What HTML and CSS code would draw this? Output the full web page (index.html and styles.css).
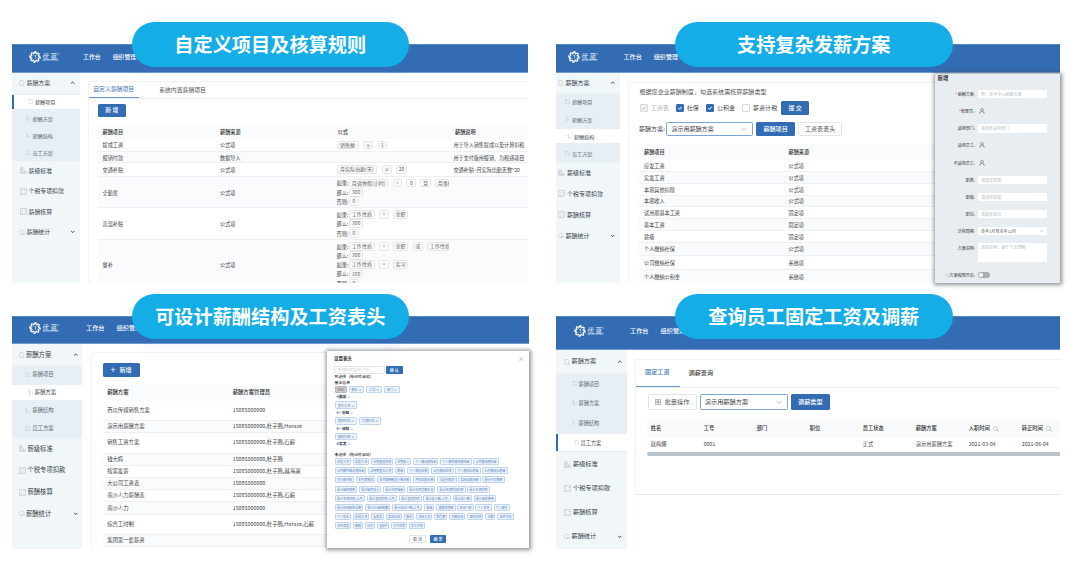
FILE: index.html
```html
<!DOCTYPE html>
<html lang="zh-CN">
<head>
<meta charset="utf-8">
<title>薪酬管理</title>
<link rel="stylesheet" href="styles.css">
</head>
<body>
<svg class="defs" width="0" height="0">
  <symbol id="gear" viewBox="0 0 20 20"><g fill="none" stroke="#fff" stroke-width="2.6" stroke-linecap="round"><path id="petal" d="M7.500 4.500Q8.500 1.800 11.500 1.500"/><use href="#petal" transform="rotate(45 10 10)"/><use href="#petal" transform="rotate(90 10 10)"/><use href="#petal" transform="rotate(135 10 10)"/><use href="#petal" transform="rotate(180 10 10)"/><use href="#petal" transform="rotate(225 10 10)"/><use href="#petal" transform="rotate(270 10 10)"/><use href="#petal" transform="rotate(315 10 10)"/></g><path d="M9 7.500h2.500l-1 5" fill="none" stroke="#dce8f6" stroke-width="1.2"/></symbol>
  <symbol id="doc" viewBox="0 0 12 12"><path d="M9.500 6V3L7.500 1H2v10h4M7 8h4M7 10.500h4" /></symbol>
  <symbol id="flow" viewBox="0 0 12 12"><path d="M3 1.500a1.500 1.500 0 1 0 .1 0M3 4.500v5M3 8h3M7.500 8H11M3 9v2h2"/></symbol>
  <symbol id="stair" viewBox="0 0 12 12"><path d="M1 1h3.500v3.500H7V8h4v3H1zM3 3v6h6"/></symbol>
  <symbol id="calc" viewBox="0 0 12 12"><path d="M.8.8h10.400v10.400H.8zM3 4h2M7.500 3l2 2M9.500 3l-2 2M3 8.500h2M4 7.500v2M7.500 8.500h2"/></symbol>
  <symbol id="pie" viewBox="0 0 12 12"><path d="M10.500 4.500A5 5 0 1 0 6 11M7 7h4v2.500H7zM7 7v4"/></symbol>
  <symbol id="up" viewBox="0 0 10 10"><path d="M2 6.500 5 3.500 8 6.500"/></symbol>
  <symbol id="down" viewBox="0 0 10 10"><path d="M2 3.500 5 6.500 8 3.500"/></symbol>
  <symbol id="user" viewBox="0 0 12 12"><path d="M6 1a2.800 2.800 0 1 1-.1 0M1.500 11.500Q2 7 5 6.500M7 6.500q3 .5 3.500 5"/></symbol>
  <symbol id="find" viewBox="0 0 12 12"><path d="M5 1a4 4 0 1 1-.1 0M8 8l3.500 3.500"/></symbol>
  <symbol id="check" viewBox="0 0 12 12"><path d="m2.500 6 2.600 2.600L9.500 3.500"/></symbol>
  <symbol id="grid" viewBox="0 0 12 12"><path d="M1 1h10v4.500H1zM1 6.500h10V11H1zM4 3.200h4M4 8.700h4"/></symbol>
</svg>

<main class="page">

<section class="panel p1">
  <header class="bar"><svg class="gear"><use href="#gear"/></svg><div class="brand"><b>优 蓝<sup>®</sup></b><small>youlanw.com</small></div><nav><span>工作台</span><span>组织管理</span></nav></header>
  <div class="body">
    <aside class="side">
      <div class="group"><svg><use href="#doc"/></svg>薪酬方案<svg class="caret"><use href="#up"/></svg></div>
      <div class="sub">
        <div class="item on"><svg><use href="#doc"/></svg>薪酬项目</div>
        <div class="item"><svg><use href="#flow"/></svg>薪酬方案</div>
        <div class="item"><svg><use href="#flow"/></svg>薪酬结构</div>
        <div class="item"><svg><use href="#doc"/></svg>员工方案</div>
      </div>
      <div class="top"><svg><use href="#stair"/></svg>薪级标准</div>
      <div class="top"><svg><use href="#calc"/></svg>个税专项扣款</div>
      <div class="top"><svg><use href="#calc"/></svg>薪酬核算</div>
      <div class="top last"><svg><use href="#pie"/></svg>薪酬统计<svg class="caret"><use href="#down"/></svg></div>
    </aside>
    <div class="card">
      <div class="tabs"><span class="on">自定义薪酬项目</span><span>系统内置薪酬项目</span></div>
      <button class="btn">新 增</button>
      <div class="table">
        <div class="tr th"><span>薪酬项目</span><span>薪酬来源</span><span>公式</span><span>薪酬说明</span></div>
        <div class="tr"><span>提成工资</span><span>公式项</span><div class="fx plain"><p><i>销售额</i><i>×</i><i>1</i></p></div><span class="wide">用于导入销售提成以及计算扣税</span></div>
        <div class="tr"><span>报销付款</span><span>数据导入</span><span></span><span class="wide">用于支付备用报销、为税感项目</span></div>
        <div class="tr"><span>交通补贴</span><span>公式项</span><div class="fx plain"><p><i>月实际出勤(天)</i><i>×</i><i>20</i></p></div><span class="wide">交通补贴=月实际出勤天数*20</span></div>
        <div class="tr"><span>全勤奖</span><span>公式项</span><div class="fx"><p>如果:<i>月调休假(小时)</i><i>=</i><i>0</i><i>且</i><i>月事假</i></p><p>那么:<i>300</i></p><p>否则:<i>0</i></p></div></div>
        <div class="tr"><span>高温补贴</span><span>公式项</span><div class="fx"><p>如果:<i>工作性质</i><i>=</i><i>全职</i></p><p>那么:<i>300</i></p><p>否则:<i>0</i></p></div></div>
        <div class="tr"><span>餐补</span><span>公式项</span><div class="fx"><p>如果:<i>工作性质</i><i>=</i><i>全职</i><i>或</i><i>工作性质</i></p><p>那么:<i>300</i></p><p>如果:<i>工作性质</i><i>=</i><i>实习</i></p><p>那么:<i>100</i></p><p>否则:<i>0</i></p></div></div>
      </div>
    </div>
  </div>
  <h2 class="pill">自定义项目及核算规则</h2>
</section>

<section class="panel p2">
  <header class="bar"><svg class="gear"><use href="#gear"/></svg><div class="brand"><b>优 蓝<sup>®</sup></b><small>youlanw.com</small></div><nav><span>工作台</span><span>组织管理</span></nav></header>
  <div class="body">
    <aside class="side">
      <div class="group"><svg><use href="#doc"/></svg>薪酬方案<svg class="caret"><use href="#up"/></svg></div>
      <div class="sub">
        <div class="item"><svg><use href="#doc"/></svg>薪酬项目</div>
        <div class="item"><svg><use href="#flow"/></svg>薪酬方案</div>
        <div class="item on"><svg><use href="#flow"/></svg>薪酬结构</div>
        <div class="item"><svg><use href="#doc"/></svg>员工方案</div>
      </div>
      <div class="top"><svg><use href="#stair"/></svg>薪级标准</div>
      <div class="top"><svg><use href="#calc"/></svg>个税专项扣款</div>
      <div class="top"><svg><use href="#calc"/></svg>薪酬核算</div>
      <div class="top last"><svg><use href="#pie"/></svg>薪酬统计<svg class="caret"><use href="#down"/></svg></div>
    </aside>
    <div class="card">
      <p class="hint">根据您企业薪酬制度，勾选系统需核算薪酬类型</p>
      <div class="checks">
        <label class="off"><em><svg><use href="#check"/></svg></em>工资表</label>
        <label class="sel"><em><svg><use href="#check"/></svg></em>社保</label>
        <label class="sel"><em><svg><use href="#check"/></svg></em>公积金</label>
        <label><em></em>薪资计税</label>
        <button class="btn">提 交</button>
      </div>
      <div class="tools"><span>薪酬方案:</span><div class="select">演示用薪酬方案<svg><use href="#down"/></svg></div><button class="btn">薪酬项目</button><button class="btn ghost">工资表表头</button></div>
      <div class="table">
        <div class="tr th"><span>薪酬项目</span><span>薪酬来源</span></div>
        <div class="tr"><span>应发工资</span><span>公式项</span></div>
        <div class="tr"><span>实发工资</span><span>公式项</span></div>
        <div class="tr"><span>本期其他扣除</span><span>公式项</span></div>
        <div class="tr"><span>本期收入</span><span>公式项</span></div>
        <div class="tr"><span>试用期基本工资</span><span>固定项</span></div>
        <div class="tr"><span>基本工资</span><span>固定项</span></div>
        <div class="tr"><span>薪级</span><span>固定项</span></div>
        <div class="tr"><span>个人缴纳社保</span><span>公式项</span></div>
        <div class="tr"><span>公司缴纳社保</span><span>系统项</span></div>
        <div class="tr"><span>个人缴纳公积金</span><span>系统项</span></div>
      </div>
    </div>
  </div>
  <div class="modal form">
    <h3>新增</h3>
    <div class="field"><span><u>*</u> 薪酬方案:</span><div class="input">例：技术中心薪酬方案</div></div>
    <div class="field"><span><u>*</u>管理员 :</span><svg><use href="#user"/></svg></div>
    <div class="field"><span>适用部门:</span><div class="input">请选择适用部门</div></div>
    <div class="field"><span>适用员工:</span><svg><use href="#user"/></svg></div>
    <div class="field"><span>不适用员工:</span><svg><use href="#user"/></svg></div>
    <div class="field"><span>职类:</span><div class="input">请选择职类</div></div>
    <div class="field"><span>职级:</span><div class="input">请选择职级</div></div>
    <div class="field"><span>职位:</span><div class="input">请选择职位</div></div>
    <div class="field"><span>计税周期:</span><div class="input dark">本年1月至本年12月<svg><use href="#down"/></svg></div></div>
    <div class="field area"><span>方案说明:</span><div class="input">添加说明、便于下次理解</div></div>
    <div class="field switch"><span>ⓘ方案权限开启:</span><div class="toggle"></div></div>
  </div>
  <h2 class="pill">支持复杂发薪方案</h2>
</section>

<section class="panel p3">
  <header class="bar"><svg class="gear"><use href="#gear"/></svg><div class="brand"><b>优 蓝<sup>®</sup></b><small>youlanw.com</small></div><nav><span>工作台</span><span>组织管理</span></nav></header>
  <div class="body">
    <aside class="side">
      <div class="group"><svg><use href="#doc"/></svg>薪酬方案<svg class="caret"><use href="#up"/></svg></div>
      <div class="sub">
        <div class="item"><svg><use href="#doc"/></svg>薪酬项目</div>
        <div class="item on"><svg><use href="#flow"/></svg>薪酬方案</div>
        <div class="item"><svg><use href="#flow"/></svg>薪酬结构</div>
        <div class="item"><svg><use href="#doc"/></svg>员工方案</div>
      </div>
      <div class="top"><svg><use href="#stair"/></svg>薪级标准</div>
      <div class="top"><svg><use href="#calc"/></svg>个税专项扣款</div>
      <div class="top"><svg><use href="#calc"/></svg>薪酬核算</div>
      <div class="top last"><svg><use href="#pie"/></svg>薪酬统计<svg class="caret"><use href="#down"/></svg></div>
    </aside>
    <div class="card">
      <button class="btn"><b>+</b>新增</button>
      <div class="table">
        <div class="tr th"><span>薪酬方案</span><span>薪酬方案管理员</span></div>
        <div class="tr"><span>西瓜传媒销售方案</span><span>15085000000</span></div>
        <div class="tr"><span>演示用薪酬方案</span><span>15085000000,杜子腾,Horace</span></div>
        <div class="tr"><span>销售工资方案</span><span>15085000000,杜子腾,石毅</span></div>
        <div class="tr"><span>钱大妈</span><span>15085000000,杜子腾</span></div>
        <div class="tr"><span>按需发薪</span><span>15085000000,杜子腾,越海澜</span></div>
        <div class="tr"><span>大公司工资表</span><span>15085000000</span></div>
        <div class="tr"><span>南沙人力薪酬表</span><span>15085000000,杜子腾,石毅</span></div>
        <div class="tr"><span>南沙人力</span><span>15085000000</span></div>
        <div class="tr"><span>综合工时制</span><span>15085000000,杜子腾,Horace,石毅</span></div>
        <div class="tr"><span>集团第一套薪资</span><span></span></div>
      </div>
    </div>
  </div>
  <div class="modal picker">
    <div class="head"><h3>设置表头</h3><span>×</span></div>
    <div class="search"><div class="input">新增加的自定义项</div><button class="btn">确 认</button></div>
    <h4>已选择（拖动可添加）</h4>
    <h4>基本信息</h4>
    <div class="chips first"><i class="lock">姓名</i><i>职位 ×</i><i>工号 ×</i><i>部门 ×</i></div>
    <h5><u>✥</u>固定<u>×</u></h5>
    <div class="chips"><i>基本工资 ×</i></div>
    <h5><u>✥ +</u>补贴<u>×</u></h5>
    <div class="chips"><i>通讯补贴 ×</i><i>交通补贴 ×</i></div>
    <h5><u>✥ +</u>绩效<u>×</u></h5>
    <div class="chips"><i>绩效扣款 ×</i></div>
    <h5><u>✥</u>实发<u>×</u></h5>
    <h4 class="rest">未选择（拖动可添加）</h4>
    <div class="pool">
      <div><i>应发工资</i><i>实发工资</i><i>本期其他扣除</i><i>本期收入</i><i>个人缴纳保险金</i><i>个人额外缴纳保险金</i><i>公司缴纳保险金</i></div>
      <div><i>公司额外缴纳保险金</i><i>试用期基本工资</i><i>薪级</i><i>个人缴纳社保</i><i>公司缴纳社保</i><i>个人缴纳公积金</i><i>公司缴纳公积金</i></div>
      <div><i>月计薪天数</i><i>本月薪税项</i><i>本月薪酬税前小数天数</i><i>月应出勤天数</i><i>法定节假日</i><i>实际出勤天数</i><i>累计子女教育</i></div>
      <div><i>累计继续教育</i><i>累计租房收入</i><i>累计住房租金</i><i>累计住房贷款利息</i><i>累计专项附加扣除</i><i>累计专项扣除</i></div>
      <div><i>累计专项扣除(上月)</i><i>累计其他扣除(上月)</i><i>累计其他扣除</i><i>累计收入额(上月)</i><i>累计收入额</i><i>累计减除费用</i></div>
      <div><i>累计应纳税所得额</i><i>累计已纳税税额</i><i>累计应纳个税(上月)</i><i>租金</i><i>速算扣除数</i><i>应纳个税</i><i>个人养老</i><i>个人医疗</i></div>
      <div><i>个人失业</i><i>提成工资</i><i>全勤奖</i><i>高温补贴</i><i>餐补</i><i>加班工资</i><i>销售额</i><i>可能补贴</i><i>津贴扣除</i><i>日薪</i><i>证件号码</i></div>
      <div><i>证件类型</i><i>邮箱</i><i>公司</i><i>组织A</i><i>工作性质</i><i>员工状态</i></div>
    </div>
    <div class="foot"><button class="btn ghost">取 消</button><button class="btn">确 定</button></div>
  </div>
  <h2 class="pill">可设计薪酬结构及工资表头</h2>
</section>

<section class="panel p4">
  <header class="bar"><svg class="gear"><use href="#gear"/></svg><div class="brand"><b>优 蓝<sup>®</sup></b><small>youlanw.com</small></div><nav><span>工作台</span><span>组织管理</span></nav></header>
  <div class="body">
    <aside class="side">
      <div class="group"><svg><use href="#doc"/></svg>薪酬方案<svg class="caret"><use href="#up"/></svg></div>
      <div class="sub">
        <div class="item"><svg><use href="#doc"/></svg>薪酬项目</div>
        <div class="item"><svg><use href="#flow"/></svg>薪酬方案</div>
        <div class="item"><svg><use href="#flow"/></svg>薪酬结构</div>
        <div class="item on"><svg><use href="#doc"/></svg>员工方案</div>
      </div>
      <div class="top"><svg><use href="#stair"/></svg>薪级标准</div>
      <div class="top"><svg><use href="#calc"/></svg>个税专项扣款</div>
      <div class="top"><svg><use href="#calc"/></svg>薪酬核算</div>
      <div class="top last"><svg><use href="#pie"/></svg>薪酬统计<svg class="caret"><use href="#down"/></svg></div>
    </aside>
    <div class="card">
      <div class="tabs"><span class="on">固定工资</span><span>调薪查询</span></div>
      <div class="tools"><button class="btn ghost"><svg><use href="#grid"/></svg>批量操作</button><div class="select">演示用薪酬方案<svg><use href="#down"/></svg></div><button class="btn">调薪类型</button></div>
      <div class="table">
        <div class="tr th"><span>姓名</span><span>工号</span><span>部门</span><span>职位</span><span>员工状态</span><span>薪酬方案</span><span>入职时间<svg><use href="#find"/></svg></span><span>转正时间<svg><use href="#find"/></svg></span></div>
        <div class="tr"><span>赵梅娜</span><span>0001</span><span></span><span></span><span>正式</span><span>演示用薪酬方案</span><span>2021-03-04</span><span>2021-06-04</span></div>
        <div class="scroll"></div>
      </div>
    </div>
  </div>
  <h2 class="pill">查询员工固定工资及调薪</h2>
</section>

</main>
</body>
</html>
```

FILE: styles.css
```css
* { box-sizing: border-box; margin: 0; padding: 0; }
html, body { width: 1080px; height: 569px; overflow: hidden; background: #fff; }
body { font-family: "Noto Sans CJK SC", sans-serif; color: #444; line-height: 1; }
i, em { font-style: normal; }
u { text-decoration: none; }
svg { fill: none; stroke: currentColor; flex: none; }
.defs { display: block; position: absolute; }

.page { display: grid; grid-template-columns: 517px 504px; grid-template-rows: 239px 233px; gap: 33px 27px; padding: 44px 0 0 12px; }
.panel { position: relative; display: flex; flex-direction: column; font-size: 5.15px; }
.p1 { width: 516px; --bar: 29px; --side: 67.500px; --group: 20.200px; --sub: 16.900px; --top: 20.400px; --menu: 5.900px; --item: 5.100px; --act: 14px; }
.p2 { --bar: 28.500px; --side: 63.500px; --group: 20.500px; --sub: 17.400px; --top: 20.900px; --menu: 6px; --item: 5.100px; --act: 14px; }
.p3 { font-size: 5.350px; margin-top: -0.5px; --bar: 28.500px; --side: 70px; --group: 21.500px; --sub: 18.100px; --top: 21.700px; --menu: 6.300px; --item: 5.400px; --act: 15px; }
.p4 { font-size: 5.250px; --bar: 33.500px; --side: 70.500px; --group: 24px; --sub: 19.700px; --top: 24px; --menu: 6.200px; --item: 5.200px; --act: 16.500px; }

/* header bar */
.bar { flex: none; height: var(--bar); background: #336cb2; border-top: 1px solid #5588c5; border-bottom: 1px solid #709bd0; display: flex; align-items: center; padding: 0 0 3px 17px; color: #fff; overflow: hidden; }
.gear { width: 12px; height: 12px; }
.brand { width: 19.500px; margin-left: 1.500px; white-space: nowrap; }
.brand b { display: block; font-size: 6.600px; font-weight: 400; color: #eaf1f9; line-height: 6px; }
.brand sup { font-size: 3px; vertical-align: 3px; line-height: 0; }
.brand small { display: block; font-size: 2.600px; line-height: 2px; color: #c2d4ea; }
.bar nav { display: flex; gap: 12px; margin-left: 21px; font-size: 5.900px; font-weight: 500; white-space: nowrap; }
.p2 .bar { padding-left: 12px; }
.p3 .bar nav { margin-left: 24px; font-size: 6.200px; }
.p2 .bar nav { margin-left: 22.500px; font-size: 6.100px; }
.p4 .bar { padding-left: 18px; }
.p4 .bar nav { margin-left: 23px; font-size: 6.200px; }

.body { flex: 1; display: flex; min-height: 0; overflow: hidden; }

/* side menu */
.side { flex: none; width: var(--side); background: #f1f6f9; color: #38434c; font-size: var(--menu); white-space: nowrap; }
.side svg { width: 6px; height: 6px; color: #b4bfcc; margin-right: 1.500px; }
.side .caret { width: 5.500px; height: 5.500px; color: #333; stroke-width: 1.6; margin: 0 4px 0 auto; }
.group, .top, .item { display: flex; align-items: center; }
.group { height: var(--group); padding-left: 7px; }
.top { height: var(--top); padding-left: 7.500px; }
.top svg { width: 7px; height: 7px; margin-right: 2px; }
.top.last { padding-left: 7px; }
.top.last svg:first-child { width: 6px; margin-right: 1.500px; }
.p2 .group, .p2 .top { padding-left: 2px; }
.p3 .group, .p3 .top { padding-left: 6.500px; }
.p4 .group, .p4 .top { padding-left: 8px; }
.sub { display: flow-root; background: #e8eff4; font-size: var(--item); color: #5c6872; }
.item { height: var(--sub); padding-left: 13.500px; }
.item svg { width: 5.500px; height: 5.500px; }
.item.on { height: var(--act); margin: calc((var(--sub) - var(--act)) / 2) 0; padding-left: 15.500px; background: #fff; color: #444d56; }
.p2 .item { padding-left: 9px; }
.p2 .item.on { padding-left: 11px; }
.p3 .item { padding-left: 13.200px; }
.p3 .item.on { padding-left: 15.500px; }
.p4 .item { padding-left: 15.500px; }
.p1 .item.on { border-left: 2px solid #336cb2; padding-left: 14px; }
.p4 .item.on { border-left: 2px solid #336cb2; padding-left: 15.500px; }

/* content card */
.card { flex: 1; min-width: 0; margin: 8px 0 0 8.500px; border: 1px solid #f0f2f4; border-right: 0; border-bottom: 0; border-radius: 2px 0 0 0; overflow: hidden; }
.tabs { display: flex; border-bottom: 1px solid #eceff1; white-space: nowrap; }
.tabs span { display: flex; align-items: center; }
.tabs .on { color: #3a70b5; border-bottom: 1.500px solid #6c96cc; }
.btn { display: flex; align-items: center; justify-content: center; border: 0; border-radius: 1.500px; background: #336cb2; color: #fff; font: inherit; font-weight: 500; line-height: 1; white-space: nowrap; flex: none; }
.btn.ghost { background: #fff; color: #555; font-weight: 400; border: 1px solid #e2e4e6; }
.select { display: flex; align-items: center; justify-content: space-between; border: 1px solid #7fa3d3; border-radius: 1.500px; flex: none; }
.select svg { width: 6.500px; height: 6.500px; color: #999; }
.tr { display: flex; align-items: center; border-bottom: 1px solid #eef1f3; white-space: nowrap; }
.tr > span { flex: none; }
.tr.th { background: #f9fafc; font-weight: 500; color: #333; border-bottom: 0; }

/* custom items */
.p1 .tabs { height: 16.500px; font-size: 5.850px; }
.p1 .tabs span { padding: 0 4.200px; width: 50px; color: #555; }
.p1 .tabs span.on { color: #3a70b5; }
.p1 .tabs span + span { margin-left: 16px; }
.p1 .card > .btn { width: 27.500px; height: 13.500px; margin: 5px 0 6.500px 9px; font-size: 5.800px; }
.p1 .table { margin-left: 9px; }
.p1 .tr > * { width: 117.500px; padding-left: 4.500px; }
.p1 .tr > .wide { width: auto; padding-left: 3px; letter-spacing: -0.08px; }
.p1 .tr:nth-child(1) { height: 15.200px; }
.p1 .tr:nth-child(2) { height: 13.600px; }
.p1 .tr:nth-child(3) { height: 11px; }
.p1 .tr:nth-child(4) { height: 14px; }
.p1 .tr:nth-child(5) { height: 31.100px; }
.p1 .tr:nth-child(6) { height: 31.900px; }
.p1 .tr:nth-child(7) { height: 50px; }
.p1 .tr:nth-child(odd) { background: #fafbfd; }
.p1 .tr .fx { flex: none; width: 116px; padding-left: 3.500px; overflow: hidden; margin-right: 1.500px; }
.fx p { display: flex; align-items: center; gap: 4.400px; height: 9.300px; }
.fx:not(.plain) p i:first-of-type { margin-left: -3.400px; }
.fx i { flex: none; min-width: 9.600px; height: 8.800px; padding: 0 1.600px; border: 1px solid #e6e6e6; border-radius: 1.500px; background: #fafafa; line-height: 6.800px; color: #666; text-align: center; font-size: 5.050px; }
.fx.plain i:first-child { padding: 0 2.500px; }

/* item selection */
.p2 .card { margin: 9px 0 0 8.500px; }
.hint { font-size: 6.050px; height: 18px; line-height: 18px; padding-left: 10.500px; color: #555; }
.checks { display: flex; align-items: center; height: 15px; padding-left: 10.500px; font-size: 6.050px; color: #444; }
.checks label { display: flex; align-items: center; gap: 3.200px; margin-right: 6.800px; }
.checks em { width: 8px; height: 8px; border: 1px solid #d9d9d9; border-radius: 1px; display: flex; }
.checks em svg { width: 6px; height: 6px; stroke-width: 2; }
.checks .off { color: #b5b5b5; }
.checks .off em { background: #f4f4f4; }
.checks .sel em { background: #336cb2; border-color: #336cb2; color: #fff; }
.checks label:nth-child(4) { margin-right: 4px; }
.checks .btn { width: 28px; height: 13.500px; font-size: 6px; }
.p2 .tools { display: flex; align-items: center; height: 13.500px; margin: 6.500px 0 8px 10px; font-size: 6.050px; }
.p2 .select { width: 86.500px; height: 13.500px; padding: 0 4px; margin: 0 3.500px 0 1.500px; }
.p2 .tools .btn { width: 38.500px; height: 13.500px; margin-right: 3px; }
.p2 .tools .ghost { width: 44.500px; }
.p2 .table { margin-left: 10px; }
.p2 .tr > span { width: 144.500px; padding-left: 5px; }
.p2 .tr { height: 11.800px; }
.p2 .tr:nth-child(odd) { background: #fafbfc; }
.p2 .tr:nth-child(1) { height: 16px; }
.p2 .tr:nth-child(2), .p2 .tr:nth-child(3) { height: 12.200px; }
.p2 .tr:nth-child(9) { height: 13.300px; }
.p2 .tr:nth-child(10), .p2 .tr:nth-child(11) { height: 13.800px; }

.modal { position: absolute; box-shadow: 0 0 4px 1.500px rgba(70, 75, 80, .6); }
.modal h3 { font-size: 5.400px; font-weight: 700; color: #333; }
.form { left: 378.500px; top: 30px; width: 125.500px; height: 208.500px; background: #e8edf1; font-size: 4.050px; padding: 2px 13px 0 3px; color: #333; }
.form h3 { height: 9.500px; }
.field { display: flex; align-items: center; height: 17.150px; }
.field > span { width: 37.500px; text-align: right; margin-right: 3px; white-space: nowrap; }
.field u { color: #e33; }
.field svg { width: 6px; height: 6px; margin-left: 1px; }
.field .input { flex: 1; height: 8.500px; background: #fff; color: #b8bcc0; padding: 0 3px; display: flex; align-items: center; }
.field .dark { color: #555; justify-content: space-between; }
.field .dark svg { width: 5px; color: #999; }
.field.area { height: 27px; align-items: flex-start; padding-top: 3px; }
.field.area > span { padding-top: 3px; }
.field.area .input { height: 19px; align-items: flex-start; padding-top: 2px; }
.field.switch { height: 14px; margin-top: 1px; }
.toggle { width: 11.500px; height: 5.500px; border-radius: 3px; background: #a9adb0; padding: .5px; }
.toggle::before { content: ""; display: block; width: 4.500px; height: 4.500px; border-radius: 50%; background: #fff; }

/* scheme list */
.p3 .card { margin-left: 9px; }
.p3 .card > .btn { width: 37px; height: 14.500px; margin: 9.500px 0 7.500px 10.500px; font-size: 6.100px; }
.p3 .btn b { font-size: 9px; font-weight: 400; margin-right: 4px; line-height: 6px; }
.p3 .table { margin-left: 11px; }
.p3 .tr > span { width: 125.500px; padding-left: 4.200px; }
.p3 .tr { height: 12.200px; }
.p3 .tr:nth-child(odd) { background: #fafbfd; }
.p3 .tr:nth-child(1) { height: 16.500px; }
.p3 .tr:nth-child(2) { height: 20px; }
.p3 .tr:nth-child(4) { height: 20.500px; }
.p3 .tr:nth-child(9) { height: 12.700px; }
.p3 .tr:nth-child(10) { height: 20px; }

.picker { left: 315px; top: 35px; width: 201.500px; height: 197.500px; background: #fff; padding: 4.500px 7px 0 7px; font-size: 3.900px; color: #333; }
.picker h3 { font-size: 4.500px; }
.picker .head { display: flex; justify-content: space-between; align-items: center; height: 7px; }
.picker .head span { font-size: 6px; color: #999; margin-right: -2.500px; line-height: 4px; }
.search { display: flex; gap: 1px; height: 8.500px; margin: 3.800px 0 0; }
.search .input { width: 51px; border: 1px solid #e2e4e6; border-radius: 1px; color: #ccc; padding-left: 3px; display: flex; align-items: center; }
.search .btn { width: 16.500px; font-size: 4px; border-radius: 1px; }
.picker h4 { font-size: 3.900px; font-weight: 500; line-height: 5.200px; padding-left: .5px; }
.picker h5 { font-size: 3.700px; font-weight: 600; height: 8px; line-height: 8px; padding-left: 1px; }
.picker h5 u { color: #5a8ac9; font-weight: 400; margin: 0 .5px; }
.chips { display: flex; gap: 2px; height: 7.600px; margin-left: 1px; }
.chips.first { margin-top: 1.200px; }
.chips i, .pool i { flex: none; display: flex; align-items: center; background: #edf3fb; border: .5px solid #c3d5ec; border-radius: 1px; color: #5b86bf; white-space: nowrap; }
.chips i { padding: 0 1.700px; font-size: 3.200px; }
.chips .lock { background: #c8c8c8; border-color: #bbb; color: #777; }
.picker .rest { margin-top: 3.500px; }
.pool { padding: 1.300px 0 0 1px; }
.pool div { display: flex; gap: 1.900px; height: 9.100px; }
.pool i { height: 7px; padding: 0 1.050px; font-size: 3.030px; }
.foot { display: flex; justify-content: center; gap: 4px; margin-top: 3.500px; }
.foot .btn { width: 16.500px; height: 8.500px; font-size: 4px; border-radius: 1px; }

/* employee list */
.p4 .card { margin: 9px 0 0 8.500px; flex: 1; height: 136px; border-bottom: 1.500px solid #e9ecee; border-radius: 2px 0 0 2px; }
.p4 .tabs { height: 28px; font-size: 6.150px; font-weight: 500; }
.p4 .tabs span { padding: 0 9px; width: 43.500px; }
.p4 .tools { display: flex; align-items: center; gap: 3.300px; margin: 6.500px 0 10px 12px; font-size: 6.200px; }
.p4 .tools .btn, .p4 .select { height: 16px; width: 38.500px; }
.p4 .tools .ghost { width: 48.500px; }
.p4 .ghost svg { width: 6px; height: 6px; margin-right: 3.500px; color: #777; }
.p4 .tools .select { width: 88px; padding: 0 4px; }
.p4 .table { margin-left: 10.500px; }
.p4 .tr > span { width: 53px; padding-left: 4.300px; display: flex; align-items: center; }
.p4 .tr { height: 14px; border: 0; }
.p4 .th { height: 18px; }
.p4 .tr svg { width: 6px; height: 6px; color: #999; margin-left: 3px; }
.scroll { height: 4px; background: #b9c3cc; border-radius: 2px 0 0 2px; }

/* captions */
.pill { position: absolute; left: 119.500px; top: -22px; width: 277.500px; height: 45px; border-radius: 22.500px; background: #14ade6; color: #fff; font-size: 19.200px; font-weight: 700; line-height: 45px; text-align: center; white-space: nowrap; box-shadow: 0 3px 14px rgba(70, 130, 240, .13); }
.p2 .pill, .p4 .pill { left: 119px; }
```
